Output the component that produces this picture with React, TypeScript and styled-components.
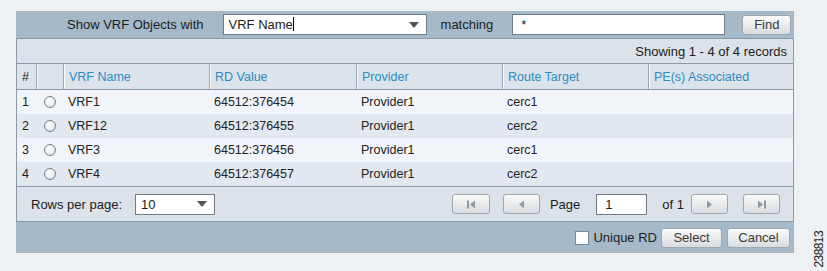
import React from 'react';
import styled, { createGlobalStyle } from 'styled-components';

const GlobalStyle = createGlobalStyle`
  html, body {
    margin: 0;
    padding: 0;
    background: #eef1f4;
  }
  body {
    font-family: 'Liberation Sans', Arial, sans-serif;
    font-size: 13px;
    color: #1c1c1c;
  }
`;

const Page = styled.div`
  position: relative;
  width: 827px;
  height: 271px;
  padding: 11px 0 0 16px;
  box-sizing: border-box;
  overflow: hidden;
`;

const Panel = styled.div`
  width: 778px;
  display: flex;
  flex-direction: column;
`;

const TopBar = styled.div`
  height: 27px;
  background: #a6b9c9;
  display: flex;
  align-items: center;
  padding-left: 51px;
  box-sizing: border-box;
`;

const BarLabel = styled.span<{ $left?: number; $right: number }>`
  margin: 0 ${(p) => p.$right}px 0 ${(p) => p.$left ?? 0}px;
  white-space: nowrap;
`;

const SelectBox = styled.div<{ $width: number }>`
  width: ${(p) => p.$width}px;
  height: 21px;
  box-sizing: border-box;
  border: 1px solid #6f7a84;
  background: #fff;
  display: flex;
  align-items: center;
  padding: 0 7px 0 5px;
  justify-content: space-between;
`;

const Caret = styled.span`
  width: 0;
  height: 0;
  border-left: 5px solid transparent;
  border-right: 5px solid transparent;
  border-top: 6px solid #555;
`;

const Cursor = styled.span`
  display: inline-block;
  width: 1px;
  height: 14px;
  background: #000;
  vertical-align: -2px;
`;

const TextBox = styled.div<{ $width: number }>`
  width: ${(p) => p.$width}px;
  height: 21px;
  box-sizing: border-box;
  border: 1px solid #6f7a84;
  background: #fff;
  display: flex;
  align-items: center;
  padding-left: 8px;
`;

const Button = styled.button<{ $width: number; $left?: number }>`
  width: ${(p) => p.$width}px;
  height: 20px;
  margin-left: ${(p) => p.$left ?? 0}px;
  box-sizing: border-box;
  border: 1px solid #9da7b0;
  border-radius: 3px;
  background: linear-gradient(#fbfbfb, #e6e8ea 60%, #d9dcdf);
  font-family: 'Liberation Sans', Arial, sans-serif;
  font-size: 13px;
  color: #3a3a3a;
  padding: 0;
  display: flex;
  align-items: center;
  justify-content: center;
`;

const Body = styled.div`
  border-left: 1px solid #8c9aa7;
  border-right: 1px solid #8c9aa7;
  border-top: 1px solid #8c9aa7;
  background: #dbe2e9;
`;

const InfoRow = styled.div`
  height: 25px;
  border-bottom: 1px solid #8c9aa7;
  box-sizing: border-box;
  display: flex;
  align-items: center;
  justify-content: flex-end;
  padding-right: 6px;
`;

const Grid = styled.div`
  display: grid;
  grid-template-columns: 19px 27px 146px 147px 146px 146px 1fr;
  font-size: 12.5px;
`;

const HeadCell = styled.div<{ $first?: boolean }>`
  height: 26px;
  box-sizing: border-box;
  display: flex;
  align-items: center;
  padding-left: 5px;
  background: #dce3ea;
  border-bottom: 1px solid #8c9aa7;
  border-left: ${(p) => (p.$first ? 'none' : '1px solid #9aa7b3')};
  box-shadow: ${(p) => (p.$first ? 'none' : 'inset 1px 0 #fbfcfd')};
  color: ${(p) => (p.$first ? '#1c1c1c' : '#2a8dc2')};
`;

const Cell = styled.div<{ $alt: boolean; $center?: boolean }>`
  height: 24px;
  box-sizing: border-box;
  display: flex;
  align-items: center;
  justify-content: ${(p) => (p.$center ? 'center' : 'flex-start')};
  padding-left: ${(p) => (p.$center ? 0 : 5)}px;
  background: ${(p) => (p.$alt ? '#e2e8ef' : '#f1f4f8')};
  color: #222;
`;

const Radio = styled.span`
  width: 12px;
  height: 12px;
  box-sizing: border-box;
  border-radius: 50%;
  border: 1px solid #76828c;
  background: radial-gradient(circle at 40% 40%, #ffffff 0%, #eceef0 50%, #c9cfd4 100%);
`;

const Footer = styled.div`
  height: 36px;
  box-sizing: border-box;
  border-top: 1px solid #8c9aa7;
  border-bottom: 1px solid #8c9aa7;
  display: flex;
  align-items: center;
  padding-left: 14px;
`;

const Pager = styled.div`
  margin-left: auto;
  margin-right: 13px;
  display: flex;
  align-items: center;
`;

const BottomBar = styled.div`
  height: 31px;
  background: #a6b9c9;
  display: flex;
  align-items: center;
  justify-content: flex-end;
  padding-right: 4px;
`;

const Check = styled.span`
  width: 14px;
  height: 14px;
  box-sizing: border-box;
  border: 1px solid #7d8891;
  background: #fff;
  margin-right: 4px;
`;

const CheckLabel = styled.label`
  display: flex;
  align-items: center;
  margin-right: 4px;
`;

const FigNum = styled.div`
  position: absolute;
  right: 1px;
  top: 231px;
  writing-mode: vertical-rl;
  transform: rotate(180deg);
  font-size: 12px;
  letter-spacing: -0.6px;
  line-height: 13px;
  color: #222;
`;

const PagerIcon = ({ kind }: { kind: 'first' | 'prev' | 'next' | 'last' }) => {
  const flip = kind === 'next' || kind === 'last';
  const bar = kind === 'first' || kind === 'last';
  return (
    <svg width="10" height="9" viewBox="0 0 10 9" style={{ transform: flip ? 'scaleX(-1)' : undefined }}>
      {bar && <rect x="1" y="0.5" width="2" height="8" fill="#8e9aa5" />}
      <polygon points={bar ? '9,0.5 4,4.5 9,8.5' : '8,0.5 3,4.5 8,8.5'} fill="#8e9aa5" />
    </svg>
  );
};

const rows = [
  ['VRF1', '64512:376454', 'Provider1', 'cerc1'],
  ['VRF12', '64512:376455', 'Provider1', 'cerc2'],
  ['VRF3', '64512:376456', 'Provider1', 'cerc1'],
  ['VRF4', '64512:376457', 'Provider1', 'cerc2'],
];

const headers = ['#', '', 'VRF Name', 'RD Value', 'Provider', 'Route Target', 'PE(s) Associated'];

export default function App() {
  return (
    <Page>
      <GlobalStyle />
      <Panel>
        <TopBar>
          <BarLabel $right={19}>Show VRF Objects with</BarLabel>
          <SelectBox $width={204}>
            <span>
              VRF Name<Cursor />
            </span>
            <Caret />
          </SelectBox>
          <BarLabel $left={14} $right={19}>
            matching
          </BarLabel>
          <TextBox $width={213}>*</TextBox>
          <Button $width={49} $left={17}>
            Find
          </Button>
        </TopBar>
        <Body>
          <InfoRow>Showing 1 - 4 of 4 records</InfoRow>
          <Grid>
            {headers.map((h, i) => (
              <HeadCell key={i} $first={i === 0}>
                {h}
              </HeadCell>
            ))}
            {rows.map((r, i) => (
              <React.Fragment key={i}>
                <Cell $alt={i % 2 === 1}>{i + 1}</Cell>
                <Cell $alt={i % 2 === 1} $center>
                  <Radio />
                </Cell>
                {r.map((v, j) => (
                  <Cell key={j} $alt={i % 2 === 1}>
                    {v}
                  </Cell>
                ))}
                <Cell $alt={i % 2 === 1} />
              </React.Fragment>
            ))}
          </Grid>
          <Footer>
            <BarLabel $right={13}>Rows per page:</BarLabel>
            <SelectBox $width={80}>
              <span>10</span>
              <Caret />
            </SelectBox>
            <Pager>
              <Button $width={38}>
                <PagerIcon kind="first" />
              </Button>
              <Button $width={37} $left={13}>
                <PagerIcon kind="prev" />
              </Button>
              <BarLabel $left={10} $right={16}>
                Page
              </BarLabel>
              <TextBox $width={51}>1</TextBox>
              <BarLabel $left={15} $right={7}>
                of 1
              </BarLabel>
              <Button $width={37}>
                <PagerIcon kind="next" />
              </Button>
              <Button $width={37} $left={15}>
                <PagerIcon kind="last" />
              </Button>
            </Pager>
          </Footer>
        </Body>
        <BottomBar>
          <CheckLabel>
            <Check />
            Unique RD
          </CheckLabel>
          <Button $width={61}>Select</Button>
          <Button $width={63} $left={5}>
            Cancel
          </Button>
        </BottomBar>
      </Panel>
      <FigNum>238813</FigNum>
    </Page>
  );
}
